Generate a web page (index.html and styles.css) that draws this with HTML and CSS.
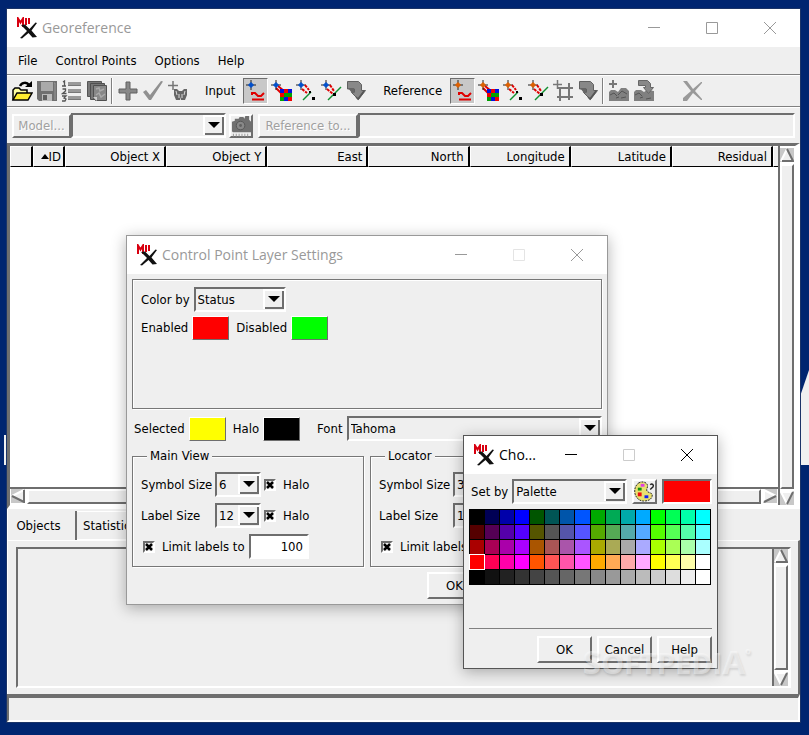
FILE: index.html
```html
<!DOCTYPE html>
<html lang="en">
<head>
    <meta charset="UTF-8">
    <meta name="viewport" content="width=device-width, initial-scale=1.0">
    <title>Georeference</title>
    <link rel="stylesheet" href="styles.css">
</head>
<body>

    <!-- shared icons -->
    <svg class="sprite" aria-hidden="true">
        <symbol id="logo" viewBox="0 0 22 22">
            <path d="M2 10V1.500l2.500 4 2.500-4V10M10 1v7M13 1v6" fill="none" stroke="#d80010" stroke-width="2"/>
            <path d="M5 8l4-.5 4.500 4.500 6-6.500 1.500.5-5.500 7.500L21 20l-4.500.5-4-4.500L6 21.500 4 21l7-7z" fill="#111"/>
        </symbol>
        <symbol id="min" viewBox="0 0 12 12"><path d="M0 5.500h12" stroke="currentColor"/></symbol>
        <symbol id="max" viewBox="0 0 12 12"><path d="M.5.5h11v11H.5z" fill="none" stroke="currentColor"/></symbol>
        <symbol id="close" viewBox="0 0 12 12"><path d="M0 0l12 12M12 0L0 12" stroke="currentColor"/></symbol>

        <symbol id="open" viewBox="0 0 22 22">
            <path d="M2 20V10l2-2h4l2 2h6v3" fill="#ffffa0" stroke="#000" stroke-width="1.500"/>
            <path d="M2 20l4-7h15l-4 7z" fill="#ffee30" stroke="#000" stroke-width="1.500"/>
            <path d="M9 6c2-4 7-4 9-1" fill="none" stroke="#000" stroke-width="2.500"/><path d="M14 7h7V1z"/>
        </symbol>
        <symbol id="save" viewBox="0 0 22 22">
            <path d="M1 1h20v20H3l-2-2z" fill="#707070"/><path d="M5 2h12v9H5z" fill="#aaa"/>
            <path d="M6 14h10v7H6z" fill="#bbb"/><path d="M7 15h4v5H7z" fill="#606060"/><path d="M18 3h1v17" stroke="#999" fill="none"/>
        </symbol>
        <symbol id="list" viewBox="0 0 22 22">
            <path d="M7 3.500h13M7 10.500h13M7 17.500h13" stroke="#999" stroke-width="3"/>
            <path d="M7 5.500h13M7 12.500h13M7 19.500h13" stroke="#777"/>
            <path d="M2 2l1.500-1v5M1 6h4M1.500 9h3v2l-3 2.500h4M1 16h4l-2 2 2 1-1 2H1" fill="none" stroke="#555" stroke-width="1.300"/>
        </symbol>
        <symbol id="copies" viewBox="0 0 22 22">
            <path d="M1.500 1.500h14v15h-14z" fill="#777" stroke="#555"/><path d="M4.500 3.500h14v16h-14z" fill="#777" stroke="#505050"/>
            <path d="M7.500 5.500h13v15h-11l-2-2z" fill="#888" stroke="#505050"/>
            <path d="M10 9l3-1 1 3 4-2M10 15l3-2 2 4 4-3" fill="none" stroke="#aaa" stroke-width="1.500"/><path d="M7 17h4v4z" fill="#ccc"/>
        </symbol>
        <symbol id="plus" viewBox="0 0 22 22"><path d="M9 2h4v7h7v4h-7v7H9v-7H2V9h7z" fill="#888" stroke="#606060"/></symbol>
        <symbol id="check" viewBox="0 0 22 22"><path d="M1 12l3-2 4 5L19 1l2 .5L9 20H7z" fill="#909090"/></symbol>
        <symbol id="find" viewBox="0 0 22 22">
            <path d="M6 1v9M1 5.500h10" stroke="#777" stroke-width="1.500"/>
            <path d="M7 9h3l2 2h3l2-2h3v6l-2 5h-4l-.5-3-.5 3h-4l-2-5z" fill="#666"/><path d="M9 11l1 4M18 11l-1 4M12 14v4M15 14v4" stroke="#ddd"/>
        </symbol>

        <symbol id="target" viewBox="0 0 10 10"><path d="M5 0v10M0 5h10" stroke="#222"/><path d="M5 2.500L7.500 5 5 7.500 2.500 5z" fill="currentColor" stroke="currentColor"/></symbol>
        <symbol id="feature" viewBox="0 0 22 22">
            <use href="#target" x="1" y="0" width="10" height="10"/>
            <path d="M7 15v-2h3l3 3h3l3-3M7 19.500h12" fill="none" stroke="#e00000" stroke-width="2"/>
        </symbol>
        <symbol id="raster" viewBox="0 0 22 22">
            <path d="M8 6l6 5M6 8l5 5" stroke="#e00000" stroke-width="2"/>
            <path d="M10 9h12v12H10z" fill="#00a000"/><path d="M14 9h4v4h-4zM10 13h4v4h-4zM18 17h4v4h-4z" fill="#f00000"/>
            <path d="M10 9h4v4h-4zM18 9h4v4h-4zM14 17h4v4h-4z" fill="#0010e0"/>
            <use href="#target" x="1" y="0" width="10" height="10"/>
        </symbol>
        <symbol id="vertex" viewBox="0 0 22 22">
            <use href="#target" x="1" y="0" width="10" height="10"/>
            <path d="M10 5l4 5M7 9l5 4" stroke="#e00000" stroke-width="2" stroke-dasharray="3 1"/>
            <path d="M8 20l8-8" stroke="#109030" stroke-width="1.500"/><path d="M14 11h2v2h-2zM17 17h3v3h-3z"/>
        </symbol>
        <symbol id="edge" viewBox="0 0 22 22">
            <use href="#target" x="1" y="0" width="10" height="10"/>
            <path d="M10 5l4 6M7 9l6 5" stroke="#e00000" stroke-width="2" stroke-dasharray="3 1"/>
            <path d="M8 20L21 7" stroke="#109030" stroke-width="1.500"/><path d="M13 13h3v3h-3z"/>
        </symbol>
        <symbol id="apply" viewBox="0 0 22 22">
            <path d="M2.500 1.500h11l3 3v6h4l-7 9-7-7h3V9h-7z" fill="#888" stroke="#606060"/><path d="M3 8h6v5H7z" fill="#666"/><path d="M19 11l-6 8-2-2" stroke="#555" fill="none" stroke-width="1.500"/>
        </symbol>
        <symbol id="grid" viewBox="0 0 22 22">
            <path d="M5.500 0v9M1 4.500h9" stroke="#777" stroke-width="1.500"/>
            <path d="M8 7v14M17 3v17M6 8h15M5 17h16" stroke="#777" stroke-width="2"/>
        </symbol>
        <symbol id="photo-add" viewBox="0 0 22 22">
            <path d="M5 0v8M1 4h8" stroke="#777" stroke-width="2"/>
            <path d="M1 12l2-2h4l3 2 3-4h5l3 3v10H1z" fill="#808080"/><path d="M2 15l4-2 3 3M10 15l4-4 5 3M8 18l3-1M13 18l5-1" fill="none" stroke="#555"/>
        </symbol>
        <symbol id="photo-go" viewBox="0 0 22 22">
            <path d="M1 12l2-2h5l3 2 3-2 7 1v10H1z" fill="#808080"/><path d="M2 15l4-2 3 3M7 18l3-1M13 19l5-1" fill="none" stroke="#555"/>
            <path d="M5.500.5h9l3 3v4h3l-5 6-5-6h2v-2h-7z" fill="#888" stroke="#666"/>
        </symbol>
        <symbol id="delete" viewBox="0 0 22 22"><path d="M1 1h4l6 8 8-7h1v1l-7 8 7 8v1h-1l-8-7-6 8H1v-3l8-7z" fill="#999"/></symbol>
        <symbol id="camera" viewBox="0 0 22 22">
            <path d="M1 6l3-1V3h4l1-2h4l1 2 1-3h4v4l2 2v11H2l-1-1z" fill="#707070"/>
            <circle cx="10" cy="10" r="4.500" fill="#888" stroke="#555"/><circle cx="10" cy="10" r="1.500" fill="#606060"/>
            <path d="M2 20h18" stroke="#999" stroke-width="3" stroke-dasharray="1 2"/>
        </symbol>
        <symbol id="paint" viewBox="0 0 22 22">
            <path d="M5 2c3-2 8-1 9 2s-2 5 0 7 6 1 5 5-5 5-9 5S2 18 1 13 2 4 5 2z" fill="#e8e070" stroke="#222" stroke-dasharray="2 1"/>
            <path d="M4 7h4v3H4z" fill="#109010"/><path d="M4 12h4v4H4z" fill="#f01010"/><path d="M7 3h4v3H7z" fill="#e040e0"/><path d="M11 15h4v3h-4z" fill="#1020f0"/>
            <path d="M17 4c2-2 4 0 3 2l-3 3" fill="none" stroke="#222" stroke-width="1.500"/>
        </symbol>

        <symbol id="arrow-up" viewBox="0 0 14 14"><path d="M0 0h14v14H0z" fill="#c8c8c8"/><path d="M7 1l6 12H1z" fill="#efefef"/><path d="M7 1L1 13" stroke="#fff" stroke-width="2"/><path d="M7 1l6 12H2" fill="none" stroke="#6e6e6e" stroke-width="2"/></symbol>
        <symbol id="arrow-down" viewBox="0 0 14 14"><path d="M0 0h14v14H0z" fill="#c8c8c8"/><path d="M1 1h12L7 13z" fill="#efefef"/><path d="M13 1H1l6 12" fill="none" stroke="#fff" stroke-width="2"/><path d="M13 1L7 13" stroke="#6e6e6e" stroke-width="2"/></symbol>
        <symbol id="arrow-left" viewBox="0 0 14 14"><path d="M0 0h14v14H0z" fill="#c8c8c8"/><path d="M13 1v12L1 7z" fill="#efefef"/><path d="M13 1L1 7" stroke="#fff" stroke-width="2"/><path d="M13 1v12L1 7" fill="none" stroke="#6e6e6e" stroke-width="2"/></symbol>
        <symbol id="arrow-right" viewBox="0 0 14 14"><path d="M0 0h14v14H0z" fill="#c8c8c8"/><path d="M1 1l12 6L1 13z" fill="#efefef"/><path d="M13 7L1 1v12" fill="none" stroke="#fff" stroke-width="2"/><path d="M13 7L1 13" stroke="#6e6e6e" stroke-width="2"/></symbol>
    </svg>

    <div class="desktop">
        <div class="wall wall-left"></div>
        <div class="wall wall-right"></div>

        <main class="window main-window">
            <header class="titlebar">
                <svg class="logo"><use href="#logo"/></svg>
                <h1>Georeference</h1>
                <button aria-label="Minimize"><svg><use href="#min"/></svg></button>
                <button aria-label="Maximize"><svg><use href="#max"/></svg></button>
                <button aria-label="Close"><svg><use href="#close"/></svg></button>
            </header>

            <nav class="menubar">
                <button>File</button>
                <button>Control Points</button>
                <button>Options</button>
                <button>Help</button>
            </nav>

            <div class="toolbar">
                <button aria-label="Open"><svg><use href="#open"/></svg></button>
                <button aria-label="Save" disabled><svg><use href="#save"/></svg></button>
                <button aria-label="Renumber" disabled><svg><use href="#list"/></svg></button>
                <button aria-label="Copies" disabled><svg><use href="#copies"/></svg></button>
                <span class="sep"></span>
                <button aria-label="Add" disabled><svg><use href="#plus"/></svg></button>
                <button aria-label="Apply" disabled><svg><use href="#check"/></svg></button>
                <button aria-label="Find" disabled><svg><use href="#find"/></svg></button>
                <span class="tool-label">Input</span>
                <div class="snap input-snap">
                    <button class="pressed" aria-label="Snap off"><svg><use href="#feature"/></svg></button>
                    <button aria-label="Snap to raster"><svg><use href="#raster"/></svg></button>
                    <button aria-label="Snap to vertex"><svg><use href="#vertex"/></svg></button>
                    <button aria-label="Snap to edge"><svg><use href="#edge"/></svg></button>
                    <button aria-label="Input next" disabled><svg><use href="#apply"/></svg></button>
                </div>
                <span class="tool-label">Reference</span>
                <div class="snap reference-snap">
                    <button class="pressed" aria-label="Snap off"><svg><use href="#feature"/></svg></button>
                    <button aria-label="Snap to raster"><svg><use href="#raster"/></svg></button>
                    <button aria-label="Snap to vertex"><svg><use href="#vertex"/></svg></button>
                    <button aria-label="Snap to edge"><svg><use href="#edge"/></svg></button>
                    <button aria-label="Snap to grid" disabled><svg><use href="#grid"/></svg></button>
                    <button aria-label="Reference next" disabled><svg><use href="#apply"/></svg></button>
                </div>
                <span class="sep"></span>
                <button aria-label="Add image" disabled><svg><use href="#photo-add"/></svg></button>
                <button aria-label="Next image" disabled><svg><use href="#photo-go"/></svg></button>
                <button class="delete" aria-label="Delete" disabled><svg><use href="#delete"/></svg></button>
            </div>

            <div class="fields">
                <button class="push" disabled>Model...</button>
                <select class="combo model" aria-label="Model"><option></option></select>
                <button class="push icon-button" aria-label="Camera" disabled><svg><use href="#camera"/></svg></button>
                <button class="push" disabled>Reference to...</button>
                <input class="reference" type="text" aria-label="Reference to" readonly>
            </div>

            <div class="points">
                <div class="points-list">
                    <table>
                        <colgroup><col class="col-mark"><col class="col-id"><col><col><col><col><col><col><col><col class="col-end"></colgroup>
                        <thead>
                            <tr>
                                <th></th><th><span class="sort"></span>ID</th><th>Object X</th><th>Object Y</th><th>East</th>
                                <th>North</th><th>Longitude</th><th>Latitude</th><th>Residual</th><th></th>
                            </tr>
                        </thead>
                    </table>
                </div>
                <div class="hscroll">
                    <button aria-label="Scroll left"><svg><use href="#arrow-left"/></svg></button>
                    <div class="thumb"></div>
                    <button aria-label="Scroll right"><svg><use href="#arrow-right"/></svg></button>
                </div>
                <div class="vscroll">
                    <button aria-label="Scroll up"><svg><use href="#arrow-up"/></svg></button>
                    <div class="thumb"></div>
                    <button aria-label="Scroll down"><svg><use href="#arrow-down"/></svg></button>
                </div>
            </div>

            <div class="tabs">
                <button class="tab active">Objects</button>
                <button class="tab">Statistics</button>
            </div>
            <div class="tab-panel">
                <div class="objects">
                    <div class="vscroll">
                        <button aria-label="Scroll up"><svg><use href="#arrow-up"/></svg></button>
                        <div class="thumb"></div>
                        <button aria-label="Scroll down"><svg><use href="#arrow-down"/></svg></button>
                    </div>
                </div>
            </div>
            <footer class="status"></footer>
        </main>

        <section class="window dialog settings">
            <header class="titlebar">
                <svg class="logo"><use href="#logo"/></svg>
                <h2>Control Point Layer Settings</h2>
                <button aria-label="Minimize"><svg><use href="#min"/></svg></button>
                <button aria-label="Maximize" disabled><svg><use href="#max"/></svg></button>
                <button aria-label="Close"><svg><use href="#close"/></svg></button>
            </header>
            <div class="dialog-body">
                <div class="box colors">
                    <div class="row">
                        <label for="colorBy">Color by</label>
                        <select id="colorBy" class="combo color-by"><option>Status</option></select>
                    </div>
                    <div class="row">
                        <label for="enabled">Enabled</label><button id="enabled" class="swatch red"></button>
                        <label for="disabled">Disabled</label><button id="disabled" class="swatch green"></button>
                    </div>
                </div>
                <div class="row selected-row">
                    <label for="selected">Selected</label><button id="selected" class="swatch yellow"></button>
                    <label for="halo">Halo</label><button id="halo" class="swatch black"></button>
                    <label class="font-label" for="font">Font</label>
                    <select id="font" class="combo font"><option>Tahoma</option></select>
                </div>
                <div class="groups">
                    <fieldset class="box">
                        <legend>Main View</legend>
                        <div class="row">
                            <label class="size-label" for="mainSymbol">Symbol Size</label>
                            <select id="mainSymbol" class="combo size"><option>6</option></select>
                            <input type="checkbox" id="mainSymbolHalo" checked><label for="mainSymbolHalo">Halo</label>
                        </div>
                        <div class="row">
                            <label class="size-label" for="mainLabel">Label Size</label>
                            <select id="mainLabel" class="combo size"><option>12</option></select>
                            <input type="checkbox" id="mainLabelHalo" checked><label for="mainLabelHalo">Halo</label>
                        </div>
                        <div class="row limit">
                            <input type="checkbox" id="mainLimit" checked><label for="mainLimit">Limit labels to</label>
                            <input type="text" aria-label="Label limit" value="100">
                        </div>
                    </fieldset>
                    <fieldset class="box">
                        <legend>Locator</legend>
                        <div class="row">
                            <label class="size-label" for="locSymbol">Symbol Size</label>
                            <select id="locSymbol" class="combo size"><option>3</option></select>
                            <input type="checkbox" id="locSymbolHalo" checked><label for="locSymbolHalo">Halo</label>
                        </div>
                        <div class="row">
                            <label class="size-label" for="locLabel">Label Size</label>
                            <select id="locLabel" class="combo size"><option>12</option></select>
                            <input type="checkbox" id="locLabelHalo" checked><label for="locLabelHalo">Halo</label>
                        </div>
                        <div class="row limit">
                            <input type="checkbox" id="locLimit" checked><label for="locLimit">Limit labels to</label>
                            <input type="text" aria-label="Label limit" value="100">
                        </div>
                    </fieldset>
                </div>
                <div class="actions">
                    <button class="push">OK</button>
                    <button class="push">Cancel</button>
                    <button class="push">Help</button>
                </div>
            </div>
        </section>

        <section class="window dialog chooser">
            <header class="titlebar">
                <svg class="logo"><use href="#logo"/></svg>
                <h2>Cho...</h2>
                <button aria-label="Minimize"><svg><use href="#min"/></svg></button>
                <button aria-label="Maximize" disabled><svg><use href="#max"/></svg></button>
                <button aria-label="Close"><svg><use href="#close"/></svg></button>
            </header>
            <div class="dialog-body">
                <div class="row set-by">
                    <label for="setBy">Set by</label>
                    <select id="setBy" class="combo palette-combo"><option>Palette</option></select>
                    <button class="push icon-button" aria-label="Edit palette"><svg><use href="#paint"/></svg></button>
                    <div class="current-color"></div>
                </div>
                <div class="palette" id="palette"></div>
                <div class="actions">
                    <button class="push">OK</button>
                    <button class="push">Cancel</button>
                    <button class="push">Help</button>
                </div>
            </div>
        </section>

        <div class="watermark"><span class="big">S</span>OFTPEDI<span class="big">A</span><span class="mark">°</span></div>
    </div>

    <script>
        const palette = document.getElementById("palette");
        const levels = [0, 85, 170, 255];

        function addColor(r, g, b) {
            const cell = document.createElement("button");
            cell.style.backgroundColor = `rgb(${r}, ${g}, ${b})`;
            cell.setAttribute("aria-label", `${r} ${g} ${b}`);
            if (r === 255 && g === 0 && b === 0) cell.className = "picked";
            palette.appendChild(cell);
        }

        // one row per red level, then a row of greys
        levels.forEach(r => levels.forEach(g => levels.forEach(b => addColor(r, g, b))));
        for (let i = 0; i < 16; i++) addColor(i * 17, i * 17, i * 17);
    </script>

</body>
</html>
```
FILE: styles.css
```css
* { box-sizing: border-box; }
body {
    margin: 0;
    font-family: "DejaVu Sans Condensed", "Noto Sans", sans-serif;
    font-size: 13px;
    line-height: 16px;
    color: #000;
}
button, input, select {
    font: inherit;
    color: inherit;
    margin: 0;
    padding: 0;
    border: 0;
    border-radius: 0;
    background: none;
}
.sprite { display: none; }
.desktop {
    position: relative;
    display: flex;
    min-height: 100vh;
    padding: 9px 9px 13px 7px;
    background: #002570;
    overflow: hidden;
}
.wall { position: absolute; background: #f0f0f0; }
.wall-left { left: 4px; top: 435px; width: 4px; height: 30px; }
.wall-right {
    right: 0;
    top: 370px;
    width: 9px;
    height: 95px;
    clip-path: polygon(100% 0, 100% 100%, 0 100%, 0 28%);
}
.window { background: #efefef; }
.main-window {
    position: relative;
    flex: 1;
    display: flex;
    flex-direction: column;
    box-shadow: 0 0 0 1px #1b3468;
}

/* title bars */
.titlebar {
    display: flex;
    align-items: center;
    height: 38px;
    padding: 0 1px 0 9px;
    background: #fff;
    color: #999;
}
.titlebar .logo { width: 22px; height: 22px; }
.titlebar h1, .titlebar h2 {
    flex: 1;
    margin: 0 0 0 4px;
    font-family: "Open Sans", sans-serif;
    font-size: 14px;
    font-weight: normal;
    line-height: 20px;
    white-space: nowrap;
}
.titlebar button { display: flex; justify-content: center; width: 58px; }
.titlebar button svg { width: 12px; height: 12px; }
.titlebar button:disabled { color: #e4e4e4; }

/* menu and toolbar */
.menubar {
    display: flex;
    gap: 18px;
    height: 28px;
    padding: 0 11px;
    border-bottom: 1px solid #808080;
}
.toolbar {
    display: flex;
    align-items: center;
    height: 32px;
    padding-left: 2px;
    border-top: 1px solid #fff;
    border-bottom: 1px solid #808080;
}
.toolbar button {
    display: flex;
    align-items: center;
    justify-content: center;
    width: 25px;
    height: 26px;
}
.toolbar svg { width: 22px; height: 22px; }
.toolbar .pressed {
    background: #c8c8c8;
    border: 1px solid;
    border-color: #6e6e6e #fff #fff #6e6e6e;
}
.sep { width: 2px; height: 26px; margin: 0 2px; background: #808080; border-right: 1px solid #fff; }
.tool-label { padding: 0 8px 0 15px; }
.snap { display: flex; }
.input-snap { color: #0050d0; }
.reference-snap { color: #e06000; }
.toolbar .delete { margin-left: 24px; }

/* controls */
.push {
    border: 2px solid;
    border-color: #fff #6e6e6e #6e6e6e #fff;
}
.push:disabled { color: #a0a0a0; text-shadow: 1px 1px 0 #fff; }
.icon-button svg { display: block; width: 21px; height: 21px; }
.combo, input[type="text"] {
    height: 25px;
    border: 2px solid;
    border-color: #6e6e6e #fff #fff #6e6e6e;
}
.combo {
    appearance: none;
    padding-left: 2px;
    background: url('data:image/svg+xml,<svg xmlns="http://www.w3.org/2000/svg" width="21" height="20"><path fill="%23efefef" d="M0 0h21v20H0z"/><path fill="%23fff" d="M0 0h21v2H2v18H0z"/><path fill="%236e6e6e" d="M19 2h2v18H2v-2h17z"/><path d="M5 7h12l-6 6z"/></svg>') right top no-repeat;
}
input[type="checkbox"] {
    appearance: none;
    flex: none;
    width: 12px;
    height: 12px;
    border: 2px solid;
    border-color: #6e6e6e #fff #fff #6e6e6e;
}
input[type="checkbox"]:checked {
    background: url('data:image/svg+xml,<svg xmlns="http://www.w3.org/2000/svg" width="8" height="8"><path d="M1 1l6 6M7 1L1 7" stroke="black" stroke-width="2.5"/></svg>') center no-repeat;
}
.row { display: flex; align-items: center; }
.swatch {
    width: 37px;
    height: 24px;
    border: 1px solid;
    border-color: #fff #6e6e6e #6e6e6e #fff;
}
.red { background: #f00; }
.green { background: #0f0; }
.yellow { background: #ff0; }
.black { background: #000; }

.fields {
    display: flex;
    align-items: center;
    height: 36px;
    padding: 0 5px;
    border-top: 1px solid #fff;
}
.fields .push { height: 24px; width: 59px; white-space: nowrap; }
.fields .icon-button { width: 24px; margin: 0 5px 0 3px; }
.fields .icon-button + .push { width: 100px; }
.model { width: 155px; }
.reference { flex: 1; min-width: 0; }

/* control point list */
.points {
    flex: 1;
    display: grid;
    grid-template: 1fr 16px / 1fr 17px;
    border: solid;
    border-width: 3px 5px 4px 3px;
    border-color: #6e6e6e #fff #fff #6e6e6e;
    background: #fff;
}
.points-list { border-bottom: 2px solid #6e6e6e; }
.points table { width: 100%; table-layout: fixed; border-collapse: separate; border-spacing: 0; }
.points th {
    height: 21px;
    padding: 0 4px 0 0;
    border: 1px solid;
    border-color: #fff #000 #000 #fff;
    border-right-width: 2px;
    background: #efefef;
    font-weight: normal;
    text-align: right;
    white-space: nowrap;
}
.points th:last-child { border-right: 0; padding: 0; }
.points th:nth-child(2) { padding-right: 2px; }
.points .vscroll { grid-column: 2; grid-row: 1 / 3; }
.col-mark { width: 23px; }
.col-id { width: 32px; }
.col-end { width: 5px; }
.sort {
    display: inline-block;
    border: 4px solid transparent;
    border-top: 0;
    border-bottom: 5px solid #000;
    vertical-align: 2px;
}
.hscroll, .vscroll { display: flex; background: #fff; }
.vscroll { flex-direction: column; width: 17px; padding: 2px 1px 0 0; border-left: 2px solid #6e6e6e; }
.hscroll button, .vscroll button { flex: none; width: 14px; height: 14px; }
.hscroll svg, .vscroll svg { display: block; width: 14px; height: 14px; }
.hscroll { padding: 0 1px; }
.thumb {
    flex: 1;
    margin: 2px 0;
    background: #efefef;
    border: 2px solid;
    border-color: #fff #6e6e6e #6e6e6e #fff;
}
.hscroll .thumb { margin: 0 2px; height: 15px; }

/* bottom tabs */
.tabs { display: flex; height: 31px; padding-top: 2px; border-left: 1px solid #fff; }
.tab { padding: 0 6px; border-top: 1px solid #fff; }
.tab.active { width: 69px; padding: 0 13px 0 7px; border-top: 0; border-right: 2px solid #6e6e6e; }
.tab-panel {
    padding: 6px 7px 6px 8px;
    border: solid;
    border-width: 1px 2px 0 1px;
    border-color: #fff #6e6e6e #fff #fff;
}
.tab:not(.active) { border-bottom: 1px solid #fff; }
.objects {
    display: flex;
    justify-content: flex-end;
    height: 141px;
    border: 2px solid;
    border-color: #6e6e6e #fff #fff #6e6e6e;
}
.objects .vscroll { padding-top: 0; }
.status {
    height: 28px;
    border: solid;
    border-width: 4px 2px 2px 2px;
    border-color: #6e6e6e #fff #fff #6e6e6e;
}

/* dialogs */
.dialog {
    position: absolute;
    border: 1px solid #999;
    box-shadow: 0 3px 14px rgba(0, 0, 0, .3);
}
.dialog-body { padding: 5px; }
.settings { left: 126px; top: 235px; width: 482px; }
.box {
    min-width: 0;
    margin: 0;
    border: 1px solid #777;
    box-shadow: 1px 1px 0 #fff, inset 1px 1px 0 #fff;
}
.colors { height: 130px; padding: 7px 8px; }
.color-by { width: 92px; margin-left: 4px; }
.colors .row + .row { margin-top: 4px; }
.swatch { margin: 0 7px 0 4px; }
.selected-row { padding: 7px 0 7px 2px; }
.font-label { margin-left: 10px; }
.font { flex: 1; margin-left: 4px; }
.groups { display: grid; grid-template-columns: 1fr 1fr; gap: 6px; }
.groups .box { padding: 8px 8px 7px; }
legend { margin-left: 6px; padding: 0 3px; background: #efefef; }
.groups .row + .row { margin-top: 6px; }
.size-label { width: 74px; }
.size { width: 46px; }
.size + input[type="checkbox"] { margin: 0 7px 0 3px; }
.limit { padding-left: 2px; }
.limit label { width: 94px; padding-left: 7px; white-space: nowrap; }
.limit input[type="text"] { width: 60px; padding-right: 4px; background: #fff; text-align: right; }
.actions { display: flex; justify-content: flex-end; gap: 5px; }
.actions .push { width: 55px; height: 27px; }
.settings .actions { margin-top: 5px; }

.chooser { left: 463px; top: 435px; width: 255px; border-color: #555; }
.chooser .titlebar { color: #000; }
.chooser .titlebar button:disabled { color: #ccc; }
.set-by { padding-left: 2px; }
.palette-combo { flex: 1; margin: 0 5px 0 4px; }
.set-by .icon-button { width: 25px; height: 25px; }
.current-color {
    width: 50px;
    height: 25px;
    margin-left: 5px;
    background: #f00;
    border: 2px solid;
    border-color: #6e6e6e #fff #fff #6e6e6e;
}
.palette {
    display: grid;
    grid-template-columns: repeat(16, 1fr);
    grid-auto-rows: 14px;
    gap: 1px;
    margin: 5px 1px 0 0;
    padding: 1px;
    background: #000;
}
.palette .picked { outline: 1px solid #fff; }
.chooser .actions { margin-top: 43px; padding-top: 7px; border-top: 1px solid #808080; }

.watermark {
    position: absolute;
    right: 58px;
    top: 643px;
    display: flex;
    align-items: baseline;
    font-family: "Open Sans", sans-serif;
    font-weight: bold;
    font-size: 29px;
    line-height: 38px;
    color: rgba(255, 255, 255, .4);
    text-shadow: 1px 2px 2px rgba(0, 0, 0, .1);
    pointer-events: none;
}
.watermark .big { font-size: 33px; }
.watermark .mark { font-size: 14px; align-self: flex-start; line-height: 24px; }
```
